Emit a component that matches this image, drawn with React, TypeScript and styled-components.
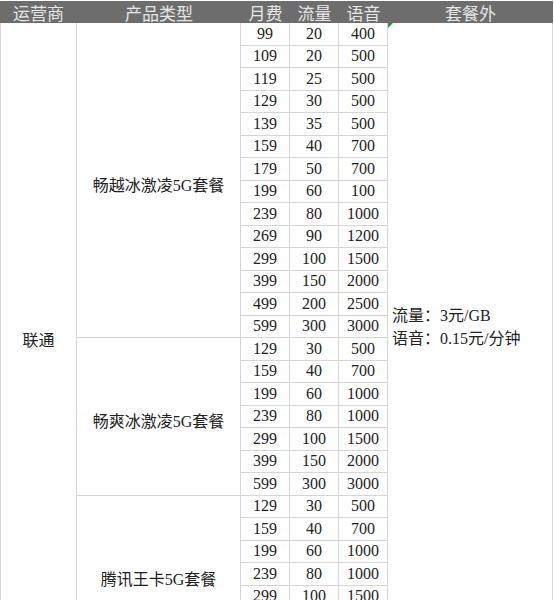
import React from 'react';
import styled, { createGlobalStyle } from 'styled-components';

const GlobalStyle = createGlobalStyle`
  html, body {
    margin: 0;
    padding: 0;
    background: #ffffff;
  }
  body {
    font-family: "Liberation Serif", "Noto Sans CJK SC", serif;
    overflow: hidden;
  }
`;

const LINE = '#d6d6d6';

const Sheet = styled.div`
  display: grid;
  grid-template-columns: 77px 164px 49px 49px 49px 165px;
  grid-template-rows: 22px repeat(28, 22.5px);
  margin-top: 1px;
  width: 554px;
`;

const HeadCell = styled.div`
  background: #6d6d6d;
  color: #e6e6e6;
  font-family: "Noto Sans CJK SC", "Noto Sans", sans-serif;
  font-size: 17px;
  display: flex;
  align-items: center;
  justify-content: center;
  white-space: nowrap;
`;

const Cell = styled.div<{ $first?: boolean }>`
  box-sizing: border-box;
  border-right: 1px solid ${LINE};
  border-bottom: 1px solid ${LINE};
  border-left: ${(p) => (p.$first ? `1px solid ${LINE}` : 'none')};
  display: flex;
  align-items: center;
  justify-content: center;
  color: #222222;
  font-size: 16px;
  white-space: nowrap;
`;

const SpanCell = styled(Cell)<{ $col: number; $row: number; $span: number }>`
  grid-column: ${(p) => p.$col};
  grid-row: ${(p) => p.$row} / span ${(p) => p.$span};
  padding-top: ${(p) => (p.$col === 2 ? '8px' : '2px')};
`;

const NumCell = styled(Cell)`
  line-height: 22px;
`;

const ExtraCell = styled.div`
  grid-column: 6;
  grid-row: 2 / span 28;
  position: relative;
  box-sizing: border-box;
  border-right: 1px solid ${LINE};
  display: flex;
  flex-direction: column;
  justify-content: center;
  padding: 0 0 22px 4px;
  color: #222222;
  font-size: 16px;
  line-height: 23px;
  white-space: nowrap;
`;

const Marker = styled.span`
  position: absolute;
  top: 0;
  left: 0;
  width: 0;
  height: 0;
  border-top: 5px solid #1e9b3c;
  border-right: 5px solid transparent;
`;

type Plan = { name: string; rows: [number, number, number][] };

const plans: Plan[] = [
  {
    name: '畅越冰激凌5G套餐',
    rows: [
      [99, 20, 400],
      [109, 20, 500],
      [119, 25, 500],
      [129, 30, 500],
      [139, 35, 500],
      [159, 40, 700],
      [179, 50, 700],
      [199, 60, 100],
      [239, 80, 1000],
      [269, 90, 1200],
      [299, 100, 1500],
      [399, 150, 2000],
      [499, 200, 2500],
      [599, 300, 3000],
    ],
  },
  {
    name: '畅爽冰激凌5G套餐',
    rows: [
      [129, 30, 500],
      [159, 40, 700],
      [199, 60, 1000],
      [239, 80, 1000],
      [299, 100, 1500],
      [399, 150, 2000],
      [599, 300, 3000],
    ],
  },
  {
    name: '腾讯王卡5G套餐',
    rows: [
      [129, 30, 500],
      [159, 40, 700],
      [199, 60, 1000],
      [239, 80, 1000],
      [299, 100, 1500],
      [399, 150, 2000],
      [599, 300, 3000],
    ],
  },
];

const headers = ['运营商', '产品类型', '月费', '流量', '语音', '套餐外'];

export default function App() {
  const total = plans.reduce((n, p) => n + p.rows.length, 0);
  let start = 2;

  return (
    <>
      <GlobalStyle />
      <Sheet>
        {headers.map((h) => (
          <HeadCell key={h}>{h}</HeadCell>
        ))}
        <SpanCell $first $col={1} $row={2} $span={total}>
          联通
        </SpanCell>
        {plans.map((plan) => {
          const row = start;
          start += plan.rows.length;
          return (
            <SpanCell key={plan.name} $col={2} $row={row} $span={plan.rows.length}>
              {plan.name}
            </SpanCell>
          );
        })}
        <ExtraCell>
          <Marker />
          <div>流量：3元/GB</div>
          <div>语音：0.15元/分钟</div>
        </ExtraCell>
        {plans.map((plan) =>
          plan.rows.map((r, i) => (
            <React.Fragment key={`${plan.name}-${i}`}>
              <NumCell>{r[0]}</NumCell>
              <NumCell>{r[1]}</NumCell>
              <NumCell>{r[2]}</NumCell>
            </React.Fragment>
          ))
        )}
      </Sheet>
    </>
  );
}
